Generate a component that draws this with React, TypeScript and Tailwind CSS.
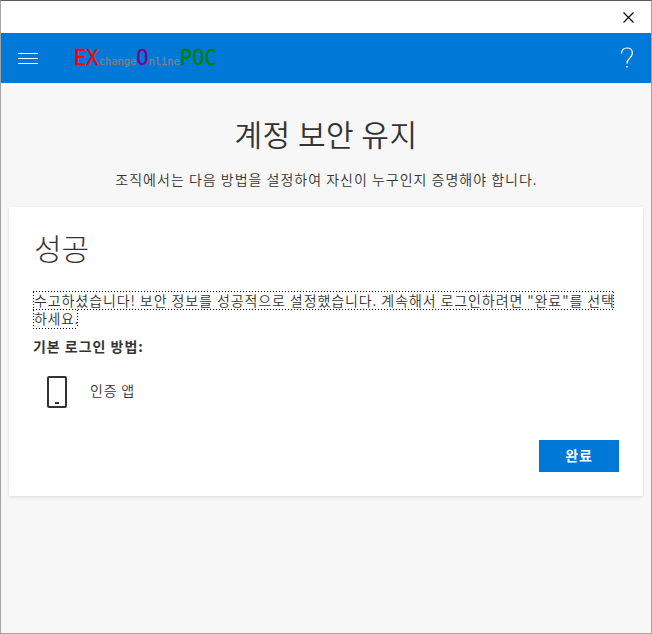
const krFont = "font-['Noto_Sans_CJK_KR',sans-serif]";
const dotsX = "block h-px shrink-0 bg-[repeating-linear-gradient(90deg,#000_0_1px,transparent_1px_3px)]";
const dotsY = "block w-px shrink-0 bg-[repeating-linear-gradient(180deg,#000_0_1px,transparent_1px_3px)]";

function TitleBar() {
  return (
    <div className="flex h-8 items-center justify-end bg-white pr-[17px]">
      <svg className="h-[11px] w-[11px]" viewBox="0 0 11 11" fill="none" stroke="#000" strokeWidth="1.1">
        <path d="M.5.5l10 10M10.5.5l-10 10" />
      </svg>
    </div>
  );
}

function Header() {
  return (
    <header className="flex h-[50px] items-center bg-[#0078d7] pr-[17px] pl-[17px]">
      <div className="flex w-5 flex-col gap-1">
        <span className="h-px bg-white" />
        <span className="h-px bg-white" />
        <span className="h-px bg-white" />
      </div>
      <div className="ml-[36px] flex flex-1 items-baseline pt-[3px] font-['DejaVu_Sans_Mono',monospace] text-[20.5px] leading-6 whitespace-nowrap [-webkit-text-stroke:0.3px]">
        <span className="text-[#ff0000]">EX</span>
        <span className="text-[10.4px] text-[#808080]">change</span>
        <span className="text-[#800080]">O</span>
        <span className="text-[10.4px] text-[#808080]">nline</span>
        <span className="text-[#008000]">POC</span>
      </div>
      <svg className="h-[22px] w-[14px]" viewBox="0 0 14 22" fill="none" stroke="#fff" strokeWidth="1.2">
        <path d="M1.6 6.5C1.6 3 3.6 1 7 1s5.4 2 5.4 5c0 2.4-1 3.6-2.7 5.2C8 12.8 7 14 7 16.5" />
        <path d="M7 19v1.6" strokeWidth="1.5" />
      </svg>
    </header>
  );
}

function FocusedMessage() {
  return (
    <div className="mt-[24px] w-[581px] text-[14px] leading-[17px] whitespace-nowrap">
      <span className={dotsX} />
      <span className="flex h-[17px]">
        <span className={dotsY} />
        <span className="w-[579px] tracking-[0.91px]">
          수고하셨습니다! 보안 정보를 성공적으로 설정했습니다. 계속해서 로그인하려면 "완료"를 선택
        </span>
        <span className={dotsY} />
      </span>
      <span className={dotsX} />
      <span className="flex h-[18px] w-[45px]">
        <span className={dotsY} />
        <span className="w-[43px] tracking-[0.6px]">하세요.</span>
        <span className={dotsY} />
      </span>
      <span className={`${dotsX} w-[45px]`} />
    </div>
  );
}

export default function App() {
  return (
    <div className={`h-[634px] w-[652px] overflow-hidden border border-[#a3a3a3] border-t-[#5a5a5a] bg-[#f7f7f7] font-[350] text-[#333] ${krFont}`}>
      <TitleBar />
      <Header />
      <h1 className="mt-[30px] text-center text-[30px] leading-[40px] tracking-[0.5px] whitespace-nowrap">계정 보안 유지</h1>
      <p className="mt-[16px] pl-px text-center text-[14px] leading-5 tracking-[1px] whitespace-nowrap">
        조직에서는 다음 방법을 설정하여 자신이 누구인지 증명해야 합니다.
      </p>
      <main className="mt-[18px] mr-[8px] ml-[8px] h-[289px] bg-white px-6 pt-[20px] shadow-[0_1px_3px_rgba(0,0,0,0.12)]">
        <h2 className="pl-px text-[30px] leading-[40px] font-light">성공</h2>
        <FocusedMessage />
        <p className="mt-[7px] text-[14px] leading-5 font-bold tracking-[0.97px]">기본 로그인 방법:</p>
        <div className="mt-[19px] flex items-center pl-[13px]">
          <svg className="h-[33px] w-[22px]" viewBox="0 0 22 33" fill="none" stroke="#333" strokeWidth="2">
            <rect x="2" y="2" width="18" height="30" rx="1" />
            <path d="M9 28h4" />
          </svg>
          <span className="-mt-1 ml-[22px] text-[14px] leading-5 tracking-[0.8px]">인증 앱</span>
        </div>
        <div className="mt-[32px] flex justify-end">
          <button className="h-8 w-20 bg-[#0078d7] pb-[2px] text-[14px] leading-5 font-bold tracking-[0.8px] text-white">완료</button>
        </div>
      </main>
    </div>
  );
}
